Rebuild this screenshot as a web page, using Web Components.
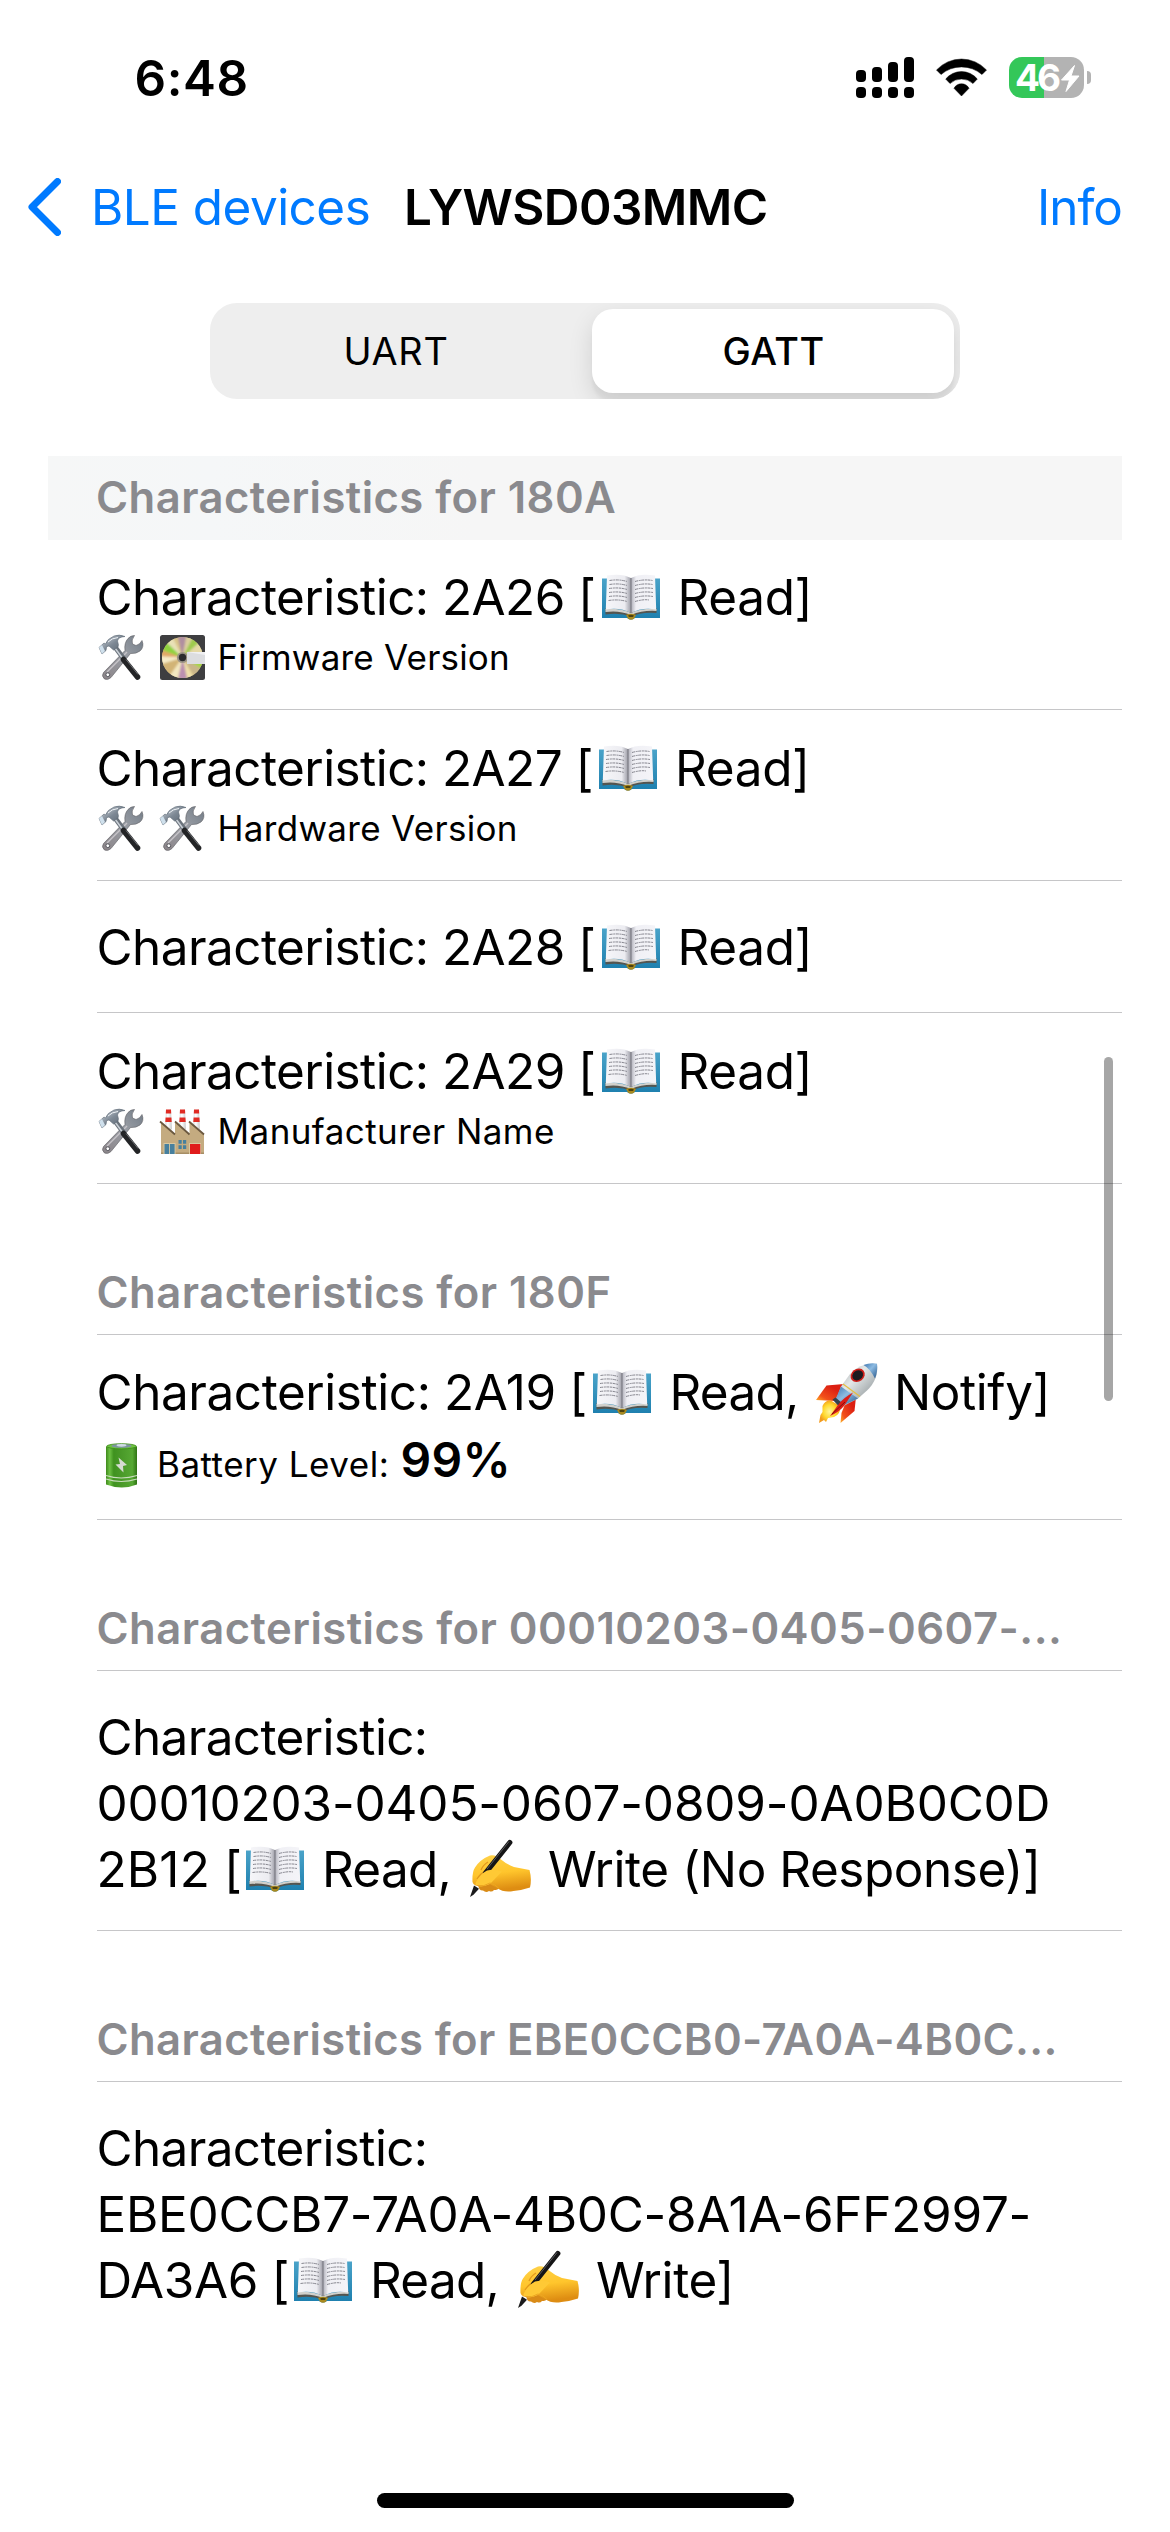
<!DOCTYPE html>
<html lang="en">
<head>
<meta charset="utf-8">
<title>LYWSD03MMC</title>
<style>
  html, body { margin: 0; background: #fff; }
  body { width: 1170px; height: 2532px; overflow: hidden; font-family: Inter, "Liberation Sans", sans-serif; color: #000; }
</style>
</head>
<body>
<ble-screen></ble-screen>
<script>
const define = (name, html) => {
  const t = document.createElement('template');
  t.innerHTML = html;
  customElements.define(name, class extends HTMLElement {
    constructor() { super(); this.attachShadow({ mode: 'open' }).append(t.content.cloneNode(true)); }
  });
};

const ICONS = {
  book: [58, 46, `
    <defs><linearGradient id="c" x2="0" y2="1"><stop offset="0" stop-color="#4aa3c9"/><stop offset="1" stop-color="#1d7fae"/></linearGradient>
    <linearGradient id="l"><stop offset="0" stop-color="#f6f6f9"/><stop offset=".75" stop-color="#ececf1"/><stop offset="1" stop-color="#9c9ca6"/></linearGradient>
    <linearGradient id="r"><stop offset="0" stop-color="#aeaeb8"/><stop offset=".2" stop-color="#f0f0f5"/><stop offset="1" stop-color="#f4f4f8"/></linearGradient></defs>
    <path fill="url(#c)" d="M0 4.500h58V44H33q-4 3-8 0H0z"/>
    <path fill="#55554f" d="M3.500 34L28.500 38.500 54.500 34v5Q40 37.500 29 42.500 18 38.500 3.500 40.500z"/>
    <path fill="#d0d0cc" d="M3.500 35q14.500-1 25.500 4 11-5 25.500-4v2q-13.500-1-25.500 4-12-5-25.500-3z"/>
    <path fill="url(#l)" d="M5 1.500Q20-1 29 4v35Q18 33 3.800 35.500z"/>
    <path fill="url(#r)" d="M53 1.500Q38-1 29 4v35q11-6 25.200-3.500z"/>
    <path stroke="#85858e" stroke-width="1" stroke-dasharray="3 .7 2 .6" fill="none" d="M7.500 6.500q9.500-1.500 17.500 1M7.500 10.500q9.500-1.500 17.500 1M7 14.500q10-1.500 18 1M7 18.500q10-1.500 18 1M7 22.500q10-1.500 18 1M6.500 26.500q10-1.500 18.500 1M33 7.500q9-2.500 17.500-1M33 11.500q9-2.500 17.500-1M33 15.500q9-2.500 18-1M33 19.500q9-2.500 18-1M33 23.500q9-2.500 18-1M33 27.500q9-2.500 14-1.500"/>
    <path stroke="#74747c" stroke-width="1" d="M29 4v35"/>
    <path fill="#a98a20" d="M24 41q5-2.500 10 0l-2 3.500q-3 2.500-6 0z"/><path fill="#4c4210" d="M26 41.500q3-1.500 6 0l-1 1.500h-4z"/>`],
  tools: [44, 45, `
    <defs><linearGradient id="m" x2="1" y2="1"><stop offset="0" stop-color="#d9dfe6"/><stop offset=".5" stop-color="#7d8894"/><stop offset="1" stop-color="#56616d"/></linearGradient>
    <linearGradient id="w" x1="1" x2="0" y2="1"><stop offset="0" stop-color="#717b86"/><stop offset=".45" stop-color="#9a9ea5"/><stop offset="1" stop-color="#8b8488"/></linearGradient></defs>
    <path fill="url(#w)" stroke="#5a5a60" stroke-width=".6" d="M35.500.500Q32 5 33.500 9l3.500 1.500q4-1 6-5Q45.500 12 41 16q-4 3-9.500 2.500L12 42.500q-3 3-6.500 1.500-3.500-3-1-6.500L26 15.500Q25 8 29 3.500 31.500.500 35.500.500z"/>
    <path stroke="#c6c3c8" stroke-width="1.500" fill="none" d="M28 17L8 37"/>
    <circle cx="8.800" cy="39.700" r="1.900" fill="#fff" stroke="#55555c"/>
    <path stroke="#6b737c" stroke-width="5" d="M16 12l9 12"/><path stroke="#cbd1d8" stroke-width="1.500" d="M16 13l8 11"/>
    <path stroke="#232426" stroke-width="5.600" stroke-linecap="round" d="M24.500 24.500L38.500 42"/><path stroke="#6c6e72" stroke-width="1" d="M27 24.500l12 15"/>
    <path fill="url(#m)" stroke="#5d6873" stroke-width=".6" d="M0 12.500l5-4.500 1.500 1Q8 4 15 1q5-2 11 .5-7 .5-7.500 4.500 1.500 4 .5 6l-4.500 3-4.500-4q-2 0-2.500 1.500L7 15.500 3 19z"/>
    <path fill="#cfe0ec" d="M0 12.500l3-2.500 3 6-3 3z"/><path stroke="#eef2f5" fill="none" d="M9 7q4-4 10-4.500"/>`],
  disk: [45, 45, `
    <defs><clipPath id="d"><circle cx="22.500" cy="22.500" r="20.500"/></clipPath><filter id="b"><feGaussianBlur stdDeviation=".9"/></filter></defs>
    <rect width="45" height="45" rx="2.500" fill="#3e3e40"/><circle cx="22.500" cy="22.500" r="20.500" fill="#d9c489"/>
    <g clip-path="url(#d)"><g filter="url(#b)">
      <path fill="#b08fa0" d="M22.500 22.500L17-2h10z"/><path fill="#dccf9f" d="M22.500 22.500L27-2h10z"/><path fill="#9fcb4d" d="M22.500 22.500L35-2l8 8z"/><path fill="#e5d9a6" d="M22.500 22.500L43 4l5 14z"/>
      <path fill="#a5d643" d="M22.500 22.500L48 27v12z"/><path fill="#c9b68a" d="M22.500 22.500L46 36l-8 10z"/><path fill="#efe0ac" d="M22.500 22.500L36 47h-8z"/><path fill="#bb8fb0" d="M22.500 22.500L28 48H17z"/>
      <path fill="#f3e8c0" d="M22.500 22.500L17 48 7 42z"/><path fill="#d2b476" d="M22.500 22.500L8 43l-9-13z"/><path fill="#f6ecc9" d="M22.500 22.500L-2 30V21z"/><path fill="#e2a766" d="M22.500 22.500L-2 21l2-7z"/>
      <path fill="#8fd33c" d="M22.500 22.500L-1 14l7-9z"/><path fill="#e9e1b8" d="M22.500 22.500L5 6l7-5z"/></g></g>
    <circle cx="22.500" cy="22.500" r="5.600" fill="#9c9487"/><circle cx="22.500" cy="22.500" r="3.700" fill="#2c2c2e"/>
    <rect x="27" y="17" width="18" height="12" fill="#dcdde0"/><path fill="#f0f0f2" d="M27 17h18v3z"/>`],
  factory: [44, 45, `
    <defs><linearGradient id="f" x2="1"><stop offset="0" stop-color="#d9d9d9"/><stop offset=".4" stop-color="#fff"/><stop offset="1" stop-color="#c9c9c9"/></linearGradient></defs>
    <g id="ch"><path fill="url(#f)" d="M6 .5h5l1 20H5z"/><path fill="#e02a22" d="M6 .5h5l.2 4H5.800zM5.600 8.500h5.800l.3 4.500H5.300z"/></g>
    <use href="#ch" x="14"/><use href="#ch" x="28"/>
    <path fill="#c4ab80" d="M1 13l14 12V13l14.500 12V13L44 25v20H1z"/>
    <path stroke="#6c5940" stroke-width="1.800" fill="none" d="M0 12.500l15 13M15 12.500l14.500 13M29 12.500l15 13"/>
    <path fill="#a68e65" d="M1 43.500h43V45H1z"/>
    <path fill="#d8c7a0" d="M3.500 34h12v11h-12zM29 34h12v11H29z"/>
    <path fill="#47809e" d="M4.500 35h4.600v10H4.500zM10 35h4.600v10H10zM18.500 31h3.200v3.800h-3.200zM23 31h3.200v3.800H23zM18.500 36.300h3.200v3.800h-3.200zM23 36.300h3.200v3.800H23z"/>
    <path fill="#e01c1c" d="M30 35h10.300v10H30z"/>`],
  cell: [31, 45, `
    <defs><linearGradient id="g"><stop offset="0" stop-color="#3f8a1c"/><stop offset=".12" stop-color="#6cc043"/><stop offset=".25" stop-color="#3f921f"/><stop offset=".5" stop-color="#4a9a29"/><stop offset=".85" stop-color="#56a833"/><stop offset="1" stop-color="#2f7414"/></linearGradient></defs>
    <path fill="url(#g)" d="M0 3.500Q15-1 31 3.500V41.500q-15 6-31 0z"/>
    <ellipse cx="15.500" cy="3.300" rx="14.800" ry="2.600" fill="#6fc440" stroke="#3b8a1b" stroke-width=".8"/><ellipse cx="15.500" cy="2.900" rx="10" ry="1.900" fill="#7d93a0"/><ellipse cx="15.500" cy="2.300" rx="5" ry="1.400" fill="#cfdbe3"/>
    <path d="M0 32.500q15 5 31 0M0 36q15 5 31 0" stroke="#c8dcbc" stroke-width="1.200" fill="none"/>
    <path fill="#d5dbd1" d="M12.500 14.500L21 22l-4 1 .5 6.500-8-8 4.500-.5z"/>`],
  rocket: [62, 60, `
    <defs><linearGradient id="k" x2="1" y2="1"><stop offset="0" stop-color="#8e979c"/><stop offset=".4" stop-color="#e4e8e8"/><stop offset="1" stop-color="#747d82"/></linearGradient>
    <linearGradient id="u" x2="1" y2="1"><stop offset="0" stop-color="#3b73ad"/><stop offset=".45" stop-color="#8dbbe2"/><stop offset="1" stop-color="#26568a"/></linearGradient>
    <linearGradient id="o" x1="1" x2="0" y2="1"><stop offset=".3" stop-color="#dc1f12"/><stop offset=".75" stop-color="#f2501b"/><stop offset="1" stop-color="#ffb52a"/></linearGradient>
    <radialGradient id="y"><stop offset="0" stop-color="#fff59a"/><stop offset=".6" stop-color="#ffd92e"/><stop offset="1" stop-color="#f39a1c"/></radialGradient></defs>
    <path fill="url(#o)" d="M0 37L10.500 22.500 28 21 19 38z"/>
    <path fill="url(#o)" d="M40 34l-1.500 14L24.500 60l1-10 4-10z"/>
    <path fill="url(#y)" d="M14 37l10 6q1 8-6 11l-6 1-2 4-2-2-5 3 1.500-8 2-3v-6q2-5 7.500-6z"/>
    <path fill="url(#k)" d="M61 .7Q45-1 34 11L25 23.500 20.500 36l8 6.500L42 35.500l9-8Q63 16 61 .7z"/>
    <path fill="url(#u)" d="M25 23.500L42 35.500l-15 7-8-5z"/>
    <path fill="url(#u)" d="M61 .7Q54-.5 47.500 2 54 5.500 59 15.500 62 8 61 .7z"/>
    <path d="M27 21L44 33.500" stroke="#e4be42" stroke-width="1.200"/>
    <path fill="#33424d" d="M16.500 36.500l3-2 6 5-3 3.500z"/>
    <path fill="#dc1c16" d="M37 29.500Q27 35 22 42L14 53q9-4 14-10z"/><path stroke="#7d120d" d="M29 39L16 51"/>
    <ellipse cx="41.700" cy="12.300" rx="7.500" ry="6.300" transform="rotate(-38 41.700 12.300)" fill="#cf1f1a"/><ellipse cx="41.700" cy="12.300" rx="5.700" ry="4.700" transform="rotate(-38 41.700 12.300)" fill="#1c1b20"/>`],
  hand: [62, 58, `
    <defs><linearGradient id="h" x2=".2" y2="1"><stop offset="0" stop-color="#ffd24a"/><stop offset=".55" stop-color="#ffc52c"/><stop offset="1" stop-color="#de8d12"/></linearGradient></defs>
    <path fill="#d98b17" d="M8 46q1 6 5 5.500 3 2.500 6 .5 3 1.500 5-1 4 0 5-2l-3-7z"/>
    <path fill="url(#h)" d="M2.500 43Q2 33 5 28.500 10 20.500 20 16.500q6-1 11 4 6 5 13 7.500l15.500 3q2.500 9 .5 17.500-9 3-16.500 3.500Q34 54 27 49l-9-5q-7 4-12.500 2.500-2.500-1-3-3.500z"/>
    <path stroke="#e2981b" stroke-width="1.300" fill="none" d="M11 31q2-5 7-8M7 40q4-6 8-7"/>
    <path stroke="#151516" stroke-width="5.200" d="M39.800 3.500L15.500 34" stroke-linecap="round"/><path stroke="#5b5b5e" stroke-width="1" d="M39 2.500L17 30"/>
    <path fill="#1b1b1c" d="M4 46.500l5 3.200-5.500 6L0 58z"/>
    <path fill="#ffc935" d="M5.500 44Q10 35 17 31.500q8-2 15 1L20 45q-7 3.500-12.500 2-2.500-1-2-3z"/><path stroke="#eda622" stroke-width="1" fill="none" d="M7 46.500q7 1.500 13-2.500 5 1 9 5.500"/>`],
};

/* Pictogram; "name" picks the drawing */
customElements.define('ble-icon', class extends HTMLElement {
  connectedCallback() {
    const [w, h, body] = ICONS[this.getAttribute('name')];
    const r = this.shadowRoot || this.attachShadow({ mode: 'open' });
    r.innerHTML = `<style>:host{display:block;flex:none;align-self:flex-start;width:${w}px;height:${h}px}svg{display:block;overflow:visible}</style>
      <svg width="${w}" height="${h}" viewBox="0 0 ${w} ${h}" fill="none">${body}</svg>`;
  }
});

/* One run of text: w = advance to the next item, ls = tracking */
customElements.define('text-run', class extends HTMLElement {
  connectedCallback() {
    const r = this.shadowRoot || this.attachShadow({ mode: 'open' });
    const w = this.getAttribute('w');
    r.innerHTML = `<style>:host{display:block;flex:none;white-space:pre;letter-spacing:${this.getAttribute('ls') || 0}px;${w ? `width:${w}px` : ''}}</style><slot></slot>`;
  }
});

define('text-line', `<style>:host{display:flex;align-items:baseline;height:66px;line-height:66px;font-size:49.4px}
  :host([sub]){height:44px;line-height:44px;font-size:35px;margin-top:5px}
  ::slotted(ble-icon[name=book]){margin-top:10px}
  ::slotted(ble-icon[name=rocket]){margin-top:4px}
  ::slotted(ble-icon[name=hand]){margin-top:3px}</style><slot></slot>`);

define('ble-row', `<style>:host{display:block;box-sizing:border-box;height:171px;margin-left:97px;padding-top:25px;border-bottom:1px solid #c6c6c8}
  :host([first]){height:170px;padding-top:24px}
  :host([plain]){height:132px;padding-top:33px}
  :host([tall]){height:185px;padding-top:24px}
  :host([wrap]){height:260px;padding-top:33px}
  :host([last]){border-color:transparent}</style><slot></slot>`);

define('ble-header', `<style>:host{display:block;box-sizing:border-box;margin-left:97px;padding-top:66.500px;height:151px;border-bottom:1px solid #c6c6c8;color:#8a8a8e;font-size:43.6px;font-weight:600;line-height:84px}
  :host([pinned]){height:84px;margin-left:48px;padding:0 0 0 48.500px;border:0;background:linear-gradient(90deg,#f6f7f7,#f5f7f8 15%,#f6f6f6 40%,#f6f6f6)}</style><slot></slot>`);

define('status-bar', `<style>:host{display:flex;align-items:center;height:127px;padding:14px 0 0 134.500px}
  .t{font-size:49.4px;font-weight:600;width:721.500px}
  svg{display:block;flex:none}
  .wifi{margin-left:22px}
  .bat{position:relative;margin-left:22px;width:75px;height:41px;border-radius:13px;background:linear-gradient(90deg,#34c759 35px,#b3b3b3 35px);display:flex;align-items:center}
  .bat text-run{font-size:37px;font-weight:700;color:#fff;line-height:41px;padding-left:6px}
  .bolt{position:absolute;left:0;top:0}
  .cap{margin-left:3px;width:4px;height:13px;border-radius:0 5px 5px 0;background:#b3b3b3}</style>
  <text-run class="t" ls=".59">6:48</text-run>
  <svg width="58" height="41"><g><rect y="13" width="10" height="12" rx="4"/><rect x="16" y="10" width="10" height="15" rx="4"/><rect x="32" y="5" width="10" height="20" rx="4"/><rect x="48" width="10" height="25" rx="4"/>
   <rect y="30" width="10" height="11" rx="4"/><rect x="16" y="30" width="10" height="11" rx="4"/><rect x="32" y="30" width="10" height="11" rx="4"/><rect x="48" y="30" width="10" height="11" rx="4"/></g></svg>
  <svg class="wifi" width="51" height="39"><path d="M.5 12A34 34 0 0 1 50.500 12L46 16.500A31.500 31.500 0 0 0 5 16.500zM9.700 21A20.500 20.500 0 0 1 41.300 21L37 25.500A17 17 0 0 0 14 25.500zM18 30.300A8.500 8.500 0 0 1 33 30.300L25.500 38z" stroke="#000" stroke-width=".5" stroke-linejoin="round"/></svg>
  <div class="bat"><text-run ls="-3">46</text-run><svg class="bolt" width="75" height="41"><path fill="#fff" stroke="#fff" stroke-linejoin="round" d="M65.500 8.500L52.500 23h8L57 34.500 70 19h-8z"/></svg></div><div class="cap"></div>`);

define('nav-bar', `<style>:host{display:flex;align-items:center;height:132px;padding-left:28px;font-size:49.4px;line-height:66px}
  svg{display:block;flex:none;margin-right:30px}
  .a{color:#007aff}.h{font-weight:600}</style>
  <svg width="33" height="58" fill="none" stroke="#007aff" stroke-width="7" stroke-linecap="round" stroke-linejoin="round"><path d="M29.500 3.500L4 29l25.500 25.500"/></svg>
  <text-run class="a" w="313" ls="-.5">BLE devices</text-run><text-run class="h" w="633" ls="-.57">LYWSD03MMC</text-run><text-run class="a" ls="-1">Info</text-run>`);

define('segmented-control', `<style>:host{display:flex;box-sizing:border-box;width:750px;height:96px;margin:30px auto 57px 210px;padding:6px;border-radius:27px;background:#eee;overflow:hidden;font-size:37.8px}
  div{flex:none;display:flex;align-items:center;justify-content:center;box-sizing:border-box;line-height:84px}
  .u{width:376px;padding:0 16px 0 0}
  .on{width:362px;padding:0 0 0 1px;border-radius:21px;background:#fff;font-weight:500;box-shadow:0 9px 24px rgba(0,0,0,.12),0 9px 3px rgba(0,0,0,.04)}</style>
  <div class="u"><text-run ls=".74">UART</text-run></div><div class="on"><text-run ls=".5">GATT</text-run></div>`);

define('scroll-thumb', `<style>:host{position:absolute;left:1104px;top:1057px;width:9px;height:344px;border-radius:5px;background:rgba(0,0,0,.35)}</style>`);

define('ble-list', `<style>:host{display:block;width:1122px}</style><slot></slot>`);

define('home-indicator', `<style>:host{display:block;width:417px;height:15px;margin:0 auto 24px 377px;border-radius:8px;background:#000}</style>`);

define('ble-screen', `<style>:host{display:flex;flex-direction:column;position:relative;width:1170px;height:2532px;background:#fff}
  ble-list{flex:1}
  text-line,ble-header text-run{margin-left:-.5px}
  .m{margin-left:18px}</style>
<status-bar></status-bar><nav-bar></nav-bar><segmented-control></segmented-control>
<ble-list>
  <ble-header pinned><text-run ls=".44">Characteristics for 180A</text-run></ble-header>
  <ble-row first><text-line><text-run w="505" ls="-.53">Characteristic: 2A26 [</text-run><ble-icon name="book"></ble-icon><text-run class="m" ls="-.3">Read]</text-run></text-line>
    <text-line sub><ble-icon name="tools" style="margin:0 17px 0 2px"></ble-icon><ble-icon name="disk" style="margin-right:13px"></ble-icon><text-run ls=".2">Firmware Version</text-run></text-line></ble-row>
  <ble-row><text-line><text-run w="502.500" ls="-.53">Characteristic: 2A27 [</text-run><ble-icon name="book"></ble-icon><text-run class="m" ls="-.3">Read]</text-run></text-line>
    <text-line sub><ble-icon name="tools" style="margin:0 17px 0 2px"></ble-icon><ble-icon name="tools" style="margin-right:14px"></ble-icon><text-run ls=".3">Hardware Version</text-run></text-line></ble-row>
  <ble-row plain><text-line><text-run w="505" ls="-.53">Characteristic: 2A28 [</text-run><ble-icon name="book"></ble-icon><text-run class="m" ls="-.3">Read]</text-run></text-line></ble-row>
  <ble-row><text-line><text-run w="505" ls="-.53">Characteristic: 2A29 [</text-run><ble-icon name="book"></ble-icon><text-run class="m" ls="-.3">Read]</text-run></text-line>
    <text-line sub><ble-icon name="tools" style="margin:0 17px 0 2px"></ble-icon><ble-icon name="factory" style="margin-right:14px"></ble-icon><text-run ls=".43">Manufacturer Name</text-run></text-line></ble-row>
  <ble-header><text-run ls=".48">Characteristics for 180F</text-run></ble-header>
  <ble-row tall><text-line><text-run w="496" ls="-.4">Characteristic: 2A19 [</text-run><ble-icon name="book"></ble-icon><text-run class="m" style="margin-left:19px" w="146" ls="-.7">Read,</text-run><ble-icon name="rocket"></ble-icon><text-run ls="-.4" style="margin-left:16.500px">Notify]</text-run></text-line>
    <text-line sub style="margin-top:13px"><ble-icon name="cell" style="margin:5px 20px 0 9.500px"></ble-icon><text-run w="243.500" ls=".49">Battery Level:</text-run><text-run ls=".3" style="font-size:48px;font-weight:600">99%</text-run></text-line></ble-row>
  <ble-header><text-run ls=".47">Characteristics for 00010203-0405-0607-...</text-run></ble-header>
  <ble-row wrap><text-line><text-run ls="-.6">Characteristic:</text-run></text-line>
    <text-line><text-run ls="-.13">00010203-0405-0607-0809-0A0B0C0D</text-run></text-line>
    <text-line><text-run w="149.500" ls=".2">2B12 [</text-run><ble-icon name="book"></ble-icon><text-run class="m" w="148" ls="-.7">Read,</text-run><ble-icon name="hand"></ble-icon><text-run style="margin-left:16px" ls="-.41">Write (No Response)]</text-run></text-line></ble-row>
  <ble-header><text-run ls=".38">Characteristics for EBE0CCB0-7A0A-4B0C...</text-run></ble-header>
  <ble-row wrap last><text-line><text-run ls="-.6">Characteristic:</text-run></text-line>
    <text-line><text-run ls="-.24">EBE0CCB7-7A0A-4B0C-8A1A-6FF2997-</text-run></text-line>
    <text-line><text-run w="197.500" ls="-.36">DA3A6 [</text-run><ble-icon name="book"></ble-icon><text-run class="m" w="148" ls="-.7">Read,</text-run><ble-icon name="hand"></ble-icon><text-run style="margin-left:16px" ls="-.4">Write]</text-run></text-line></ble-row>
</ble-list>
<home-indicator></home-indicator>
<scroll-thumb></scroll-thumb>`);
</script>
</body>
</html>
